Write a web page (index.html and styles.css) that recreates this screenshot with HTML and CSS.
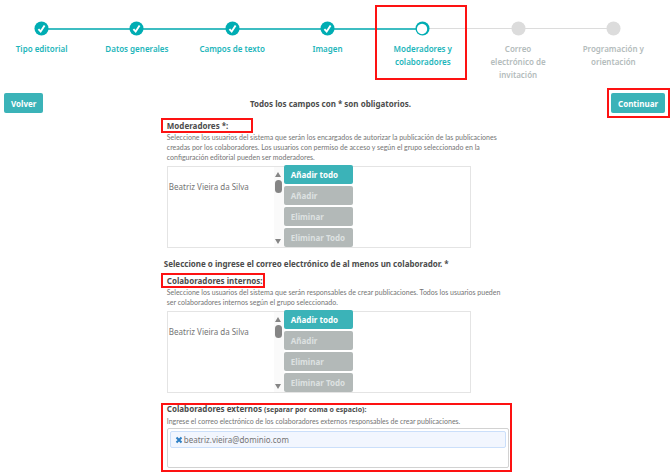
FILE: index.html
```
<!DOCTYPE html>
<html lang="es">
<head>
    <meta charset="UTF-8">
    <meta name="viewport" content="width=device-width, initial-scale=1.0">
    <title>Moderadores y colaboradores</title>
    <link rel="stylesheet" href="styles.css">
</head>
<body>
    <ol class="stepper">
        <li class="step done">
            <svg class="dot" viewBox="0 0 16 16"><circle cx="8" cy="8" r="7.5"/><path d="M4.7 8.7l2.4 2.5L11.3 4.8"/></svg>
            <span class="step-label">Tipo editorial</span>
        </li>
        <li class="step done">
            <svg class="dot" viewBox="0 0 16 16"><circle cx="8" cy="8" r="7.5"/><path d="M4.7 8.7l2.4 2.5L11.3 4.8"/></svg>
            <span class="step-label">Datos generales</span>
        </li>
        <li class="step done">
            <svg class="dot" viewBox="0 0 16 16"><circle cx="8" cy="8" r="7.5"/><path d="M4.7 8.7l2.4 2.5L11.3 4.8"/></svg>
            <span class="step-label">Campos de texto</span>
        </li>
        <li class="step done">
            <svg class="dot" viewBox="0 0 16 16"><circle cx="8" cy="8" r="7.5"/><path d="M4.7 8.7l2.4 2.5L11.3 4.8"/></svg>
            <span class="step-label">Imagen</span>
        </li>
        <li class="step current marked">
            <svg class="dot" viewBox="0 0 16 16"><circle cx="8" cy="8" r="7.5"/><circle class="hole" cx="7.5" cy="8.5" r="5.5"/></svg>
            <span class="step-label">Moderadores y colaboradores</span>
        </li>
        <li class="step">
            <svg class="dot" viewBox="0 0 16 16"><circle cx="8" cy="8" r="7.5"/></svg>
            <span class="step-label">Correo electrónico de invitación</span>
        </li>
        <li class="step">
            <svg class="dot" viewBox="0 0 16 16"><circle cx="8" cy="8" r="7.5"/></svg>
            <span class="step-label">Programación y orientación</span>
        </li>
    </ol>

    <div class="toolbar">
        <button type="button" class="btn">Volver</button>
        <p class="notice">Todos los campos con * son obligatorios.</p>
        <span class="marked"><button type="submit" form="editorialForm" class="btn">Continuar</button></span>
    </div>

    <form id="editorialForm" class="form">
        <div class="form-group">
            <label class="title marked marked-short" for="moderadores">Moderadores *:</label>
            <p class="help">Seleccione los usuarios del sistema que serán los encargados de autorizar la publicación de las publicaciones<br>creadas por los colaboradores. Los usuarios con permiso de acceso y según el grupo seleccionado en la<br>configuración editorial pueden ser moderadores.</p>
            <div class="transfer">
                <select id="moderadores" class="list" multiple>
                    <option></option>
                    <option>Beatriz Vieira da Silva</option>
                </select>
                <svg class="scrollbar" viewBox="0 0 10 80"><path d="M1 10l3-5 3 5zM1 72l3 5 3-5z"/><rect x="1" y="13" width="7" height="13" rx="3.5"/></svg>
                <div class="actions">
                    <button type="button" class="btn">Añadir todo</button>
                    <button type="button" class="btn" disabled>Añadir</button>
                    <button type="button" class="btn" disabled>Eliminar</button>
                    <button type="button" class="btn" disabled>Eliminar Todo</button>
                </div>
                <select class="list chosen" aria-label="Moderadores seleccionados" multiple></select>
            </div>
        </div>

        <p class="subtitle">Seleccione o ingrese el correo electrónico de al menos un colaborador. *</p>

        <div class="form-group">
            <label class="title marked" for="internos">Colaboradores internos:</label>
            <p class="help">Seleccione los usuarios del sistema que serán responsables de crear publicaciones. Todos los usuarios pueden<br>ser colaboradores internos según el grupo seleccionado.</p>
            <div class="transfer">
                <select id="internos" class="list" multiple>
                    <option></option>
                    <option>Beatriz Vieira da Silva</option>
                </select>
                <svg class="scrollbar" viewBox="0 0 10 80"><path d="M1 10l3-5 3 5zM1 72l3 5 3-5z"/><rect x="1" y="13" width="7" height="13" rx="3.5"/></svg>
                <div class="actions">
                    <button type="button" class="btn">Añadir todo</button>
                    <button type="button" class="btn" disabled>Añadir</button>
                    <button type="button" class="btn" disabled>Eliminar</button>
                    <button type="button" class="btn" disabled>Eliminar Todo</button>
                </div>
                <select class="list chosen" aria-label="Colaboradores seleccionados" multiple></select>
            </div>
        </div>

        <div class="form-group external marked">
            <label class="title" for="externos">Colaboradores externos <small>(separar por coma o espacio):</small></label>
            <p class="help">Ingrese el correo electrónico de los colaboradores externos responsables de crear publicaciones.</p>
            <div class="tags">
                <div class="tag">
                    <button type="button" class="remove" aria-label="Quitar">
                        <svg viewBox="0 0 8 8"><path d="M1.5 1.5l5 5M6.5 1.5l-5 5"/></svg>
                    </button>
                    <span>beatriz.vieira@dominio.com</span>
                </div>
                <input type="text" id="externos">
            </div>
        </div>
    </form>
</body>
</html>
```
FILE: styles.css
```
* {
    box-sizing: border-box;
}
body {
    font-family: 'Noto Sans', sans-serif;
    font-size: 8px;
    background-color: white;
    margin: 0;
    min-height: 100vh;
    color: #4c4c4c;
}
p {
    margin: 0;
}
button, input, select {
    font: inherit;
}

/* Recuadros rojos de la guía */
.marked {
    position: relative;
}
.marked::after {
    content: '';
    position: absolute;
    inset: -1px -2px -1px -6px;
    border: 2px solid #fd1212;
    pointer-events: none;
}
.marked-short::after {
    right: -25px;
}

/* Pasos */
.stepper {
    display: grid;
    grid-template-columns: repeat(7, 1fr);
    list-style: none;
    margin: 0 9px 0 -6px;
    padding: 21px 0 0;
    height: 93px;
}
.step {
    position: relative;
    display: flex;
    flex-direction: column;
    align-items: center;
    gap: 6px;
    height: 59px;
    color: #b4bcbc;
    text-align: center;
}
.step + .step::before {
    content: '';
    position: absolute;
    z-index: -1;
    top: 7px;
    left: -50%;
    width: 100%;
    height: 1px;
    background-color: #dcdcdc;
}
.step.done + .step::before {
    height: 2px;
    background-color: #3dbdc2;
}
.dot {
    flex-shrink: 0;
    width: 15px;
    height: 15px;
    fill: #dcdcdc;
}
.dot path {
    fill: none;
    stroke: white;
    stroke-width: 2;
}
.done, .current {
    color: #1cb5ba;
}
.done .dot, .current .dot {
    fill: #00adb3;
}
.dot .hole {
    fill: white;
}
.step-label {
    max-width: 70px;
    font-weight: 600;
    line-height: 13px;
}
.step.marked::after {
    inset: -16px 3px 0 0;
}

.btn {
    height: 20px;
    padding: 0 7px;
    border: 0;
    border-radius: 2px;
    background-color: #3bb3b8;
    color: white;
    font-weight: bold;
    white-space: nowrap;
    cursor: pointer;
}
.btn:disabled {
    background-color: #b3b9b8;
    color: #dde1e1;
    cursor: default;
}
.toolbar {
    display: grid;
    grid-template-columns: 1fr auto 1fr;
    align-items: center;
    justify-items: start;
    padding: 0 5px 0 4px;
}
.toolbar .marked {
    display: flex;
    justify-self: end;
}
.toolbar .marked::after {
    inset: -5px -5px -5px -4px;
}
.notice {
    margin-right: 8px;
}
.notice, .subtitle {
    font-weight: bold;
}

.form {
    width: 52%;
    min-width: 345px;
    margin: 6px auto 0;
}
.form-group {
    padding-left: 6px;
}
.title {
    display: inline-block;
    font-weight: bold;
    line-height: 13px;
    vertical-align: top;
}
.title small {
    font-size: 7px;
}
.help {
    color: #747474;
    font-family: Lato, sans-serif;
    font-size: 7px;
    line-height: 10px;
    white-space: nowrap;
}
.transfer {
    display: flex;
    width: 304px;
    margin-top: 4px;
    border: 1px solid #e4e4e4;
}
.list {
    width: 106px;
    height: 80px;
    padding: 0;
    border: 0;
    outline: 0;
    background-color: white;
    color: #747474;
    overflow: hidden;
}
.list option {
    height: 14px;
    min-height: 14px;
    padding: 0 1px;
    line-height: 14px;
}
.chosen {
    flex: 1;
}
.scrollbar {
    width: 10px;
    height: 80px;
    background-color: #fafafa;
    fill: #858585;
}
.actions {
    display: flex;
    flex-direction: column;
    gap: 2px;
    width: 69px;
    margin: -2px 0 0;
}
.actions .btn {
    height: 19px;
    text-align: left;
}
.subtitle {
    margin: 9px 0 4px 3px;
    line-height: 13px;
}
.external {
    margin-top: 9px;
}
.external.marked::after {
    inset: 1px -3px -4px 0;
}
.tags {
    height: 40px;
    margin-top: 2px;
    padding: 2px;
    border: 1px solid #d2d2d2;
    border-radius: 2px;
}
.tag {
    display: flex;
    align-items: center;
    gap: 1px;
    height: 17px;
    padding-left: 4px;
    border: 1px solid #cbdffa;
    border-radius: 2px;
    background-color: #f2f6fe;
    color: #747474;
}
.remove {
    display: flex;
    padding: 0;
    border: 0;
    background: none;
    cursor: pointer;
}
.remove svg {
    width: 8px;
    height: 8px;
    stroke: #2d7fc4;
    stroke-width: 2;
}
.tags input {
    display: block;
    width: 100%;
    height: 16px;
    border: 0;
    outline: 0;
    background: none;
}
```
